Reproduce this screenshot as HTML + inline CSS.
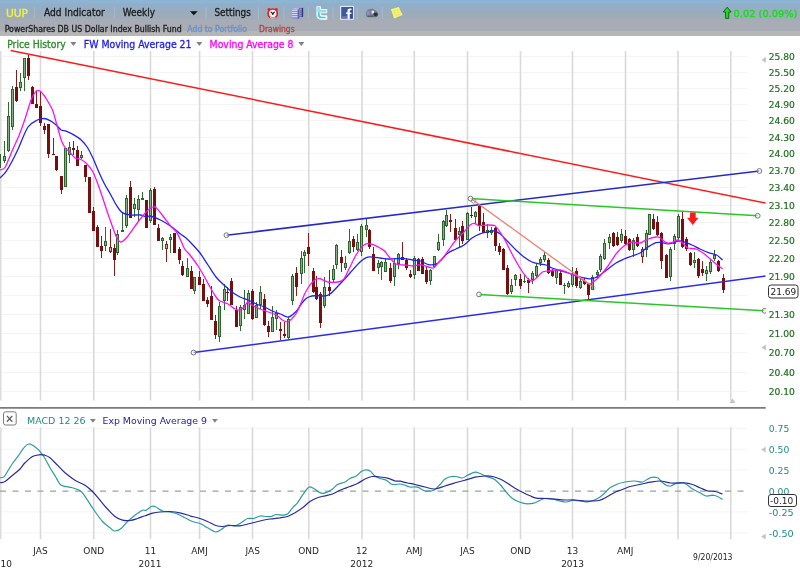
<!DOCTYPE html>
<html lang="en"><head><meta charset="utf-8"><title>UUP Weekly Chart</title>
<style>
html,body{margin:0;padding:0;background:#fff;}
body{width:800px;height:568px;overflow:hidden;}
svg{display:block;will-change:transform;}
text{font-family:"DejaVu Sans","Liberation Sans",sans-serif;}
.t{font-family:"DejaVu Sans Condensed","DejaVu Sans","Liberation Sans",sans-serif;}
.ax{font-size:9.2px;fill:#1f6f1f;stroke:#1f6f1f;stroke-width:0.2px;}
.mx{font-size:9.2px;fill:#1f8c8c;}
.dt{font-size:9px;fill:#262626;text-anchor:middle;}
</style></head><body>
<svg width="800" height="568" viewBox="0 0 800 568">
<defs><linearGradient id="hg" x1="0" y1="0" x2="0" y2="1">
<stop offset="0" stop-color="#8cb4d3"/>
<stop offset="0.08" stop-color="#8cb4d3"/>
<stop offset="0.10" stop-color="#93aec7"/>
<stop offset="0.25" stop-color="#93aec6"/>
<stop offset="0.30" stop-color="#95adbe"/>
<stop offset="0.36" stop-color="#9cacba"/>
<stop offset="0.52" stop-color="#9facb8"/>
<stop offset="0.56" stop-color="#a8acb5"/>
<stop offset="0.86" stop-color="#a8acb5"/>
<stop offset="0.875" stop-color="#b5b7b6"/>
<stop offset="1" stop-color="#b5b7b6"/>
</linearGradient></defs>
<rect x="0" y="0" width="800" height="568" fill="#fff"/>
<rect x="0" y="0" width="800" height="36" fill="url(#hg)"/>
<text class="t" x="5.9" y="16.7" font-size="10.3" fill="#f2f23c" stroke="#f2f23c" stroke-width="0.28" textLength="22.2" lengthAdjust="spacingAndGlyphs">UUP</text>
<text class="t" x="44" y="15.5" font-size="9.9" fill="#1c1c1c" stroke="#1c1c1c" stroke-width="0.28" textLength="60.8" lengthAdjust="spacingAndGlyphs">Add Indicator</text>
<text class="t" x="122.7" y="15.5" font-size="9.9" fill="#1c1c1c" stroke="#1c1c1c" stroke-width="0.28" textLength="32.3" lengthAdjust="spacingAndGlyphs">Weekly</text>
<text class="t" x="214.4" y="15.5" font-size="9.9" fill="#1c1c1c" stroke="#1c1c1c" stroke-width="0.28" textLength="36.5" lengthAdjust="spacingAndGlyphs">Settings</text>
<text class="t" x="4.7" y="32.3" font-size="8.1" fill="#1e1e1e" stroke="#1e1e1e" stroke-width="0.28" textLength="177.1" lengthAdjust="spacingAndGlyphs">PowerShares DB US Dollar Index Bullish Fund</text>
<text class="t" x="187.3" y="32.3" font-size="8.1" fill="#6a90cc" stroke="#6a90cc" stroke-width="0.28" textLength="59.7" lengthAdjust="spacingAndGlyphs">Add to Portfolio</text>
<text class="t" x="259.1" y="32.3" font-size="8.1" fill="#b04545" stroke="#b04545" stroke-width="0.28" textLength="35.5" lengthAdjust="spacingAndGlyphs">Drawings</text>
<text class="t" x="7.2" y="47.5" font-size="10" fill="#2a8a2a" stroke="#2a8a2a" stroke-width="0.28" textLength="58.5" lengthAdjust="spacingAndGlyphs">Price History</text>
<text class="t" x="83.75" y="47.5" font-size="10" fill="#1c1cf0" stroke="#1c1cf0" stroke-width="0.28" textLength="107.8" lengthAdjust="spacingAndGlyphs">FW Moving Average 21</text>
<text class="t" x="209.6" y="47.5" font-size="10" fill="#ff00ff" stroke="#ff00ff" stroke-width="0.28" textLength="83.9" lengthAdjust="spacingAndGlyphs">Moving Average 8</text>
<text class="t" x="733.6" y="16.7" font-size="9.3" fill="#0ee40e" stroke="#0ee40e" stroke-width="0.28" textLength="63.8" lengthAdjust="spacingAndGlyphs">0.02 (0.09%)</text>
<rect x="33.9" y="7" width="1" height="12" fill="#a9bdd0" opacity="0.8"/>
<rect x="113.9" y="7" width="1" height="12" fill="#a9bdd0" opacity="0.8"/>
<rect x="205.5" y="7" width="1" height="12" fill="#a9bdd0" opacity="0.8"/>
<rect x="258.0" y="7" width="1" height="12" fill="#a9bdd0" opacity="0.8"/>
<rect x="283.4" y="7" width="1" height="12" fill="#a9bdd0" opacity="0.8"/>
<rect x="307.8" y="7" width="1" height="12" fill="#a9bdd0" opacity="0.8"/>
<rect x="332.5" y="7" width="1" height="12" fill="#a9bdd0" opacity="0.8"/>
<rect x="357.0" y="7" width="1" height="12" fill="#a9bdd0" opacity="0.8"/>
<rect x="382.0" y="7" width="1" height="12" fill="#a9bdd0" opacity="0.8"/>
<path d="M190 11.3h7.7l-3.85 3.9z" fill="#111"/>
<path d="M70.4 42h6l-3 4z" fill="#808080"/>
<path d="M196.3 42h6l-3 4z" fill="#808080"/>
<path d="M298.3 42h6l-3 4z" fill="#808080"/>
<path d="M727.2 7.2L731.2 12H728.8V18.4H725.6V12H723.2Z" fill="#00f000" stroke="#1f4f1f" stroke-width="0.9" stroke-linejoin="round"/>
<g>
<circle cx="269.1" cy="9.5" r="1.6" fill="#f01a1a"/><circle cx="276.3" cy="9.5" r="1.6" fill="#f01a1a"/>
<circle cx="272.7" cy="13.6" r="4.6" fill="#e2f6f6" stroke="#f01a1a" stroke-width="1.7"/>
<path d="M271 11.9l1.8 1.9 1.8-1.9M272.8 13.8v1.3" stroke="#1c1c1c" stroke-width="1.2" fill="none"/>
<path d="M270 17.4c1.6 0.9 3.8 0.9 5.4 0" stroke="#a8e6e6" stroke-width="1.2" fill="none"/>
<rect x="298.6" y="7.4" width="4.5" height="9.6" rx="1" fill="#6266b0"/>
<path d="M298.6 9.4h4.5M298.6 11.4h4.5M298.6 13.4h4.5M298.6 15.4h4.5" stroke="#a8a8e8" stroke-width="0.8"/>
<rect x="301.8" y="7.8" width="1.3" height="9" fill="#34346c"/>
<rect x="292" y="8.6" width="7.2" height="10.2" rx="1.2" fill="#8488d2"/>
<path d="M292 10.4h7.2M292 12.5h7.2M292 14.6h7.2M292 16.7h7.2" stroke="#dde0f8" stroke-width="1"/>
<rect x="297.6" y="9" width="1.6" height="9.6" fill="#50509c" opacity="0.8"/>
<ellipse cx="295.6" cy="8.8" rx="3.4" ry="0.9" fill="#b8bcf0"/><ellipse cx="300.8" cy="7.6" rx="2.2" ry="0.7" fill="#a0a4e0"/>
<path d="M317.2 6.9h3.2v2.8h6.1v2.9h-6.1v2.1c0 1 0.6 1.4 1.6 1.4h4.5v2.8h-5.1c-2.7 0-4.2-1.5-4.2-4.1z" fill="#2ad0f2" stroke="#fbffff" stroke-width="1.5" stroke-linejoin="round"/>
<path d="M317.2 6.9h3.2v2.8h6.1v2.9h-9.3z" fill="#9adcea"/>
<rect x="340.7" y="6.4" width="12.6" height="12.8" fill="#3b5aa2" stroke="#f4f6fb" stroke-width="1"/>
<rect x="350.5" y="6.9" width="2.3" height="11.8" fill="#2c3f92" opacity="0.7"/>
<path d="M347.5 18.7v-4.7h-1.5v-1.6h1.5v-1.5c0-1.4 0.9-2.3 2.4-2.3h1.6v1.7h-1.1c-0.5 0-0.7 0.3-0.7 0.8v1.3h1.7v1.6h-1.7v4.7z" fill="#fff"/>
<rect x="342.2" y="16.6" width="5" height="0.8" fill="#8ea6d8"/>
<path d="M366 11.8l2.2-2.2 4-1.2 3 1.6 2.6 2.6v3.4l-2 1.2h-8.4l-1.6-1.6z" fill="#7c7e88"/>
<rect x="366.9" y="11" width="2.6" height="4.4" fill="#8a8ae0"/>
<path d="M371.6 10.8h2.2l0.4 1.5-1.2 1.1h-1.4z" fill="#ececec"/>
<circle cx="375.7" cy="14.4" r="2" fill="#1e2c34" stroke="#55606a" stroke-width="0.6"/>
<path d="M367.5 16.2h6" stroke="#3c5058" stroke-width="0.9"/>
<path d="M390.9 9.2l7.9-2.3 3.7 8.1-8.4 3.4z" fill="#f6f66e"/>
<path d="M393.4 11.2l1.8-0.5M396.6 10.3l1.8-0.5M394.2 13.2l1.8-0.5M397.4 12.3l1.8-0.5" stroke="#dede58" stroke-width="0.9"/>
<path d="M395.6 15.6l2-0.8M398.6 14.6l1.8-0.6" stroke="#f4b8c8" stroke-width="1"/>
</g>
<g shape-rendering="crispEdges">
<rect x="1" y="56" width="747" height="1" fill="#f4f4f4"/>
<rect x="1" y="72" width="747" height="1" fill="#f4f4f4"/>
<rect x="1" y="88" width="747" height="1" fill="#f4f4f4"/>
<rect x="1" y="104" width="747" height="1" fill="#f4f4f4"/>
<rect x="1" y="120" width="747" height="1" fill="#f4f4f4"/>
<rect x="1" y="137" width="747" height="1" fill="#f4f4f4"/>
<rect x="1" y="153" width="747" height="1" fill="#f4f4f4"/>
<rect x="1" y="170" width="747" height="1" fill="#f4f4f4"/>
<rect x="1" y="187" width="747" height="1" fill="#f4f4f4"/>
<rect x="1" y="205" width="747" height="1" fill="#f4f4f4"/>
<rect x="1" y="222" width="747" height="1" fill="#f4f4f4"/>
<rect x="1" y="240" width="747" height="1" fill="#f4f4f4"/>
<rect x="1" y="258" width="747" height="1" fill="#f4f4f4"/>
<rect x="1" y="276" width="747" height="1" fill="#f4f4f4"/>
<rect x="1" y="295" width="747" height="1" fill="#f4f4f4"/>
<rect x="1" y="314" width="747" height="1" fill="#f4f4f4"/>
<rect x="1" y="333" width="747" height="1" fill="#f4f4f4"/>
<rect x="1" y="352" width="747" height="1" fill="#f4f4f4"/>
<rect x="1" y="372" width="747" height="1" fill="#f4f4f4"/>
<rect x="1" y="391" width="747" height="1" fill="#f4f4f4"/>
</g>
<rect x="1" y="427.8" width="747" height="1" fill="#f4f4f4"/>
<rect x="1" y="448.7" width="747" height="1" fill="#f4f4f4"/>
<rect x="1" y="469.6" width="747" height="1" fill="#f4f4f4"/>
<rect x="1" y="511.4" width="747" height="1" fill="#f4f4f4"/>
<rect x="1" y="532.3" width="747" height="1" fill="#f4f4f4"/>
<rect x="0" y="51" width="1.5" height="349.5" fill="#dcdcdc"/>
<rect x="0" y="427.5" width="1.5" height="111.5" fill="#dcdcdc"/>
<rect x="39.70" y="51" width="1.6" height="349.6" fill="#d9d9d9"/>
<rect x="39.70" y="427.4" width="1.6" height="111.8" fill="#d9d9d9"/>
<rect x="92.95" y="51" width="1.6" height="349.6" fill="#d9d9d9"/>
<rect x="92.95" y="427.4" width="1.6" height="111.8" fill="#d9d9d9"/>
<rect x="149.70" y="51" width="1.6" height="349.6" fill="#d9d9d9"/>
<rect x="149.70" y="427.4" width="1.6" height="111.8" fill="#d9d9d9"/>
<rect x="198.80" y="51" width="1.6" height="349.6" fill="#d9d9d9"/>
<rect x="198.80" y="427.4" width="1.6" height="111.8" fill="#d9d9d9"/>
<rect x="251.70" y="51" width="1.6" height="349.6" fill="#d9d9d9"/>
<rect x="251.70" y="427.4" width="1.6" height="111.8" fill="#d9d9d9"/>
<rect x="307.95" y="51" width="1.6" height="349.6" fill="#d9d9d9"/>
<rect x="307.95" y="427.4" width="1.6" height="111.8" fill="#d9d9d9"/>
<rect x="361.20" y="51" width="1.6" height="349.6" fill="#d9d9d9"/>
<rect x="361.20" y="427.4" width="1.6" height="111.8" fill="#d9d9d9"/>
<rect x="413.45" y="51" width="1.6" height="349.6" fill="#d9d9d9"/>
<rect x="413.45" y="427.4" width="1.6" height="111.8" fill="#d9d9d9"/>
<rect x="466.70" y="51" width="1.6" height="349.6" fill="#d9d9d9"/>
<rect x="466.70" y="427.4" width="1.6" height="111.8" fill="#d9d9d9"/>
<rect x="519.70" y="51" width="1.6" height="349.6" fill="#d9d9d9"/>
<rect x="519.70" y="427.4" width="1.6" height="111.8" fill="#d9d9d9"/>
<rect x="571.70" y="51" width="1.6" height="349.6" fill="#d9d9d9"/>
<rect x="571.70" y="427.4" width="1.6" height="111.8" fill="#d9d9d9"/>
<rect x="624.70" y="51" width="1.6" height="349.6" fill="#d9d9d9"/>
<rect x="624.70" y="427.4" width="1.6" height="111.8" fill="#d9d9d9"/>
<rect x="677.20" y="51" width="1.6" height="349.6" fill="#d9d9d9"/>
<rect x="677.20" y="427.4" width="1.6" height="111.8" fill="#d9d9d9"/>
<rect x="729.95" y="51" width="1.6" height="349.6" fill="#d9d9d9"/>
<rect x="729.95" y="427.4" width="1.6" height="111.8" fill="#d9d9d9"/>
<rect x="0" y="407" width="765.7" height="1.1" fill="#7c7c7c"/><rect x="0" y="408" width="765.7" height="1" fill="#9c9c9c"/>
<path d="M0 491.1H748" stroke="#97a39b" stroke-width="1.25" stroke-dasharray="6 6.5" fill="none"/>
<g class="ax">
<text x="768.7" y="60.4" textLength="26.2" lengthAdjust="spacingAndGlyphs">25.80</text>
<text x="768.7" y="76.1" textLength="26.2" lengthAdjust="spacingAndGlyphs">25.50</text>
<text x="768.7" y="92.0" textLength="26.2" lengthAdjust="spacingAndGlyphs">25.20</text>
<text x="768.7" y="108.0" textLength="26.2" lengthAdjust="spacingAndGlyphs">24.90</text>
<text x="768.7" y="124.3" textLength="26.2" lengthAdjust="spacingAndGlyphs">24.60</text>
<text x="768.7" y="140.8" textLength="26.2" lengthAdjust="spacingAndGlyphs">24.30</text>
<text x="768.7" y="157.4" textLength="26.2" lengthAdjust="spacingAndGlyphs">24.00</text>
<text x="768.7" y="174.3" textLength="26.2" lengthAdjust="spacingAndGlyphs">23.70</text>
<text x="768.7" y="191.4" textLength="26.2" lengthAdjust="spacingAndGlyphs">23.40</text>
<text x="768.7" y="208.7" textLength="26.2" lengthAdjust="spacingAndGlyphs">23.10</text>
<text x="768.7" y="226.3" textLength="26.2" lengthAdjust="spacingAndGlyphs">22.80</text>
<text x="768.7" y="244.0" textLength="26.2" lengthAdjust="spacingAndGlyphs">22.50</text>
<text x="768.7" y="262.0" textLength="26.2" lengthAdjust="spacingAndGlyphs">22.20</text>
<text x="768.7" y="280.3" textLength="26.2" lengthAdjust="spacingAndGlyphs">21.90</text>
<text x="768.7" y="317.6" textLength="26.2" lengthAdjust="spacingAndGlyphs">21.30</text>
<text x="768.7" y="336.6" textLength="26.2" lengthAdjust="spacingAndGlyphs">21.00</text>
<text x="768.7" y="355.9" textLength="26.2" lengthAdjust="spacingAndGlyphs">20.70</text>
<text x="768.7" y="375.5" textLength="26.2" lengthAdjust="spacingAndGlyphs">20.40</text>
<text x="768.7" y="395.4" textLength="26.2" lengthAdjust="spacingAndGlyphs">20.10</text>
</g>
<g class="mx">
<text x="768.7" y="432.2" textLength="20.6" lengthAdjust="spacingAndGlyphs">0.75</text>
<text x="768.7" y="453.1" textLength="20.6" lengthAdjust="spacingAndGlyphs">0.50</text>
<text x="768.7" y="474.0" textLength="20.6" lengthAdjust="spacingAndGlyphs">0.25</text>
<text x="768.7" y="494.9" textLength="20.6" lengthAdjust="spacingAndGlyphs">0.00</text>
<text x="768.7" y="515.8" textLength="25" lengthAdjust="spacingAndGlyphs">-0.25</text>
<text x="768.7" y="536.7" textLength="25" lengthAdjust="spacingAndGlyphs">-0.50</text>
</g>
<path d="M761.5 59.9l4.4-2.9v5.8z" fill="#c2c2c2"/>
<path d="M761.5 347.5l4.4-2.9v5.8z" fill="#c2c2c2"/>
<path d="M761.2 449.6l4.5-2.9v5.8z" fill="#c2c2c2"/>
<path d="M761.2 536.6l4.5-2.9v5.8z" fill="#c2c2c2"/>
<path d="M732.5 398.5l3 4.5h-6z" fill="#c4c4c4"/>
<g shape-rendering="crispEdges">
<rect x="-1" y="153" width="1" height="17" fill="#2f6b2f"/>
<rect x="-2" y="154" width="3" height="14" fill="#2d632d"/>
<rect x="-1" y="155" width="1" height="12" fill="#84b084"/>
<rect x="4" y="141" width="1" height="22" fill="#2f6b2f"/>
<rect x="3" y="156" width="3" height="5" fill="#2d632d"/>
<rect x="4" y="157" width="1" height="3" fill="#84b084"/>
<rect x="8" y="102" width="1" height="50" fill="#2f6b2f"/>
<rect x="7" y="116" width="3" height="35" fill="#2d632d"/>
<rect x="8" y="117" width="1" height="33" fill="#84b084"/>
<rect x="12" y="86" width="1" height="44" fill="#2f6b2f"/>
<rect x="11" y="89" width="3" height="38" fill="#2d632d"/>
<rect x="12" y="90" width="1" height="36" fill="#84b084"/>
<rect x="16" y="70" width="1" height="32" fill="#8a1c1c"/>
<rect x="15" y="87" width="3" height="14" fill="#741010"/>
<rect x="20" y="73" width="1" height="18" fill="#2f6b2f"/>
<rect x="19" y="82" width="3" height="6" fill="#2d632d"/>
<rect x="20" y="83" width="1" height="4" fill="#84b084"/>
<rect x="24" y="58" width="1" height="33" fill="#2f6b2f"/>
<rect x="23" y="58" width="3" height="20" fill="#2d632d"/>
<rect x="24" y="59" width="1" height="18" fill="#84b084"/>
<rect x="28" y="55" width="1" height="25" fill="#8a1c1c"/>
<rect x="27" y="58" width="3" height="18" fill="#741010"/>
<rect x="32" y="86" width="1" height="18" fill="#8a1c1c"/>
<rect x="31" y="87" width="3" height="17" fill="#741010"/>
<rect x="36" y="91" width="1" height="17" fill="#8a1c1c"/>
<rect x="35" y="104" width="3" height="4" fill="#741010"/>
<rect x="40" y="92" width="1" height="34" fill="#8a1c1c"/>
<rect x="39" y="106" width="3" height="17" fill="#741010"/>
<rect x="44" y="123" width="1" height="11" fill="#8a1c1c"/>
<rect x="43" y="126" width="3" height="4" fill="#741010"/>
<rect x="48" y="124" width="1" height="34" fill="#8a1c1c"/>
<rect x="47" y="124" width="3" height="30" fill="#741010"/>
<rect x="53" y="138" width="1" height="17" fill="#8a1c1c"/>
<rect x="52" y="154" width="3" height="1" fill="#741010"/>
<rect x="56" y="156" width="1" height="15" fill="#8a1c1c"/>
<rect x="55" y="156" width="3" height="14" fill="#741010"/>
<rect x="61" y="176" width="1" height="18" fill="#8a1c1c"/>
<rect x="60" y="176" width="3" height="14" fill="#741010"/>
<rect x="65" y="148" width="1" height="39" fill="#2f6b2f"/>
<rect x="64" y="148" width="3" height="39" fill="#2d632d"/>
<rect x="65" y="149" width="1" height="37" fill="#84b084"/>
<rect x="69" y="142" width="1" height="21" fill="#2f6b2f"/>
<rect x="68" y="147" width="3" height="8" fill="#2d632d"/>
<rect x="69" y="148" width="1" height="6" fill="#84b084"/>
<rect x="73" y="141" width="1" height="14" fill="#8a1c1c"/>
<rect x="72" y="148" width="3" height="2" fill="#741010"/>
<rect x="77" y="146" width="1" height="20" fill="#8a1c1c"/>
<rect x="76" y="150" width="3" height="16" fill="#741010"/>
<rect x="81" y="151" width="1" height="8" fill="#2f6b2f"/>
<rect x="80" y="155" width="3" height="3" fill="#2d632d"/>
<rect x="81" y="156" width="1" height="1" fill="#84b084"/>
<rect x="85" y="165" width="1" height="17" fill="#8a1c1c"/>
<rect x="84" y="165" width="3" height="12" fill="#741010"/>
<rect x="89" y="177" width="1" height="36" fill="#8a1c1c"/>
<rect x="88" y="177" width="3" height="36" fill="#741010"/>
<rect x="93" y="207" width="1" height="24" fill="#8a1c1c"/>
<rect x="92" y="211" width="3" height="20" fill="#741010"/>
<rect x="97" y="225" width="1" height="22" fill="#8a1c1c"/>
<rect x="96" y="227" width="3" height="20" fill="#741010"/>
<rect x="101" y="236" width="1" height="22" fill="#8a1c1c"/>
<rect x="100" y="246" width="3" height="5" fill="#741010"/>
<rect x="105" y="227" width="1" height="24" fill="#2f6b2f"/>
<rect x="104" y="241" width="3" height="5" fill="#2d632d"/>
<rect x="105" y="242" width="1" height="3" fill="#84b084"/>
<rect x="110" y="229" width="1" height="24" fill="#8a1c1c"/>
<rect x="109" y="247" width="3" height="5" fill="#8a2020"/>
<rect x="110" y="248" width="1" height="3" fill="#e0a8a8"/>
<rect x="114" y="244" width="1" height="32" fill="#8a1c1c"/>
<rect x="113" y="248" width="3" height="12" fill="#741010"/>
<rect x="117" y="230" width="1" height="25" fill="#2f6b2f"/>
<rect x="116" y="234" width="3" height="19" fill="#2d632d"/>
<rect x="117" y="235" width="1" height="17" fill="#84b084"/>
<rect x="122" y="212" width="1" height="20" fill="#2f6b2f"/>
<rect x="121" y="230" width="3" height="2" fill="#2d632d"/>
<rect x="126" y="195" width="1" height="33" fill="#2f6b2f"/>
<rect x="125" y="198" width="3" height="28" fill="#2d632d"/>
<rect x="126" y="199" width="1" height="26" fill="#84b084"/>
<rect x="130" y="181" width="1" height="37" fill="#8a1c1c"/>
<rect x="129" y="187" width="3" height="31" fill="#741010"/>
<rect x="134" y="198" width="1" height="19" fill="#2f6b2f"/>
<rect x="133" y="204" width="3" height="5" fill="#2d632d"/>
<rect x="134" y="205" width="1" height="3" fill="#84b084"/>
<rect x="138" y="195" width="1" height="27" fill="#2f6b2f"/>
<rect x="137" y="199" width="3" height="11" fill="#2d632d"/>
<rect x="138" y="200" width="1" height="9" fill="#84b084"/>
<rect x="142" y="192" width="1" height="8" fill="#2f6b2f"/>
<rect x="141" y="198" width="3" height="2" fill="#2d632d"/>
<rect x="146" y="200" width="1" height="28" fill="#8a1c1c"/>
<rect x="145" y="200" width="3" height="28" fill="#741010"/>
<rect x="150" y="188" width="1" height="35" fill="#2f6b2f"/>
<rect x="149" y="190" width="3" height="31" fill="#2d632d"/>
<rect x="150" y="191" width="1" height="29" fill="#84b084"/>
<rect x="154" y="187" width="1" height="38" fill="#8a1c1c"/>
<rect x="153" y="189" width="3" height="36" fill="#741010"/>
<rect x="158" y="224" width="1" height="17" fill="#8a1c1c"/>
<rect x="157" y="228" width="3" height="13" fill="#741010"/>
<rect x="162" y="237" width="1" height="13" fill="#2f6b2f"/>
<rect x="161" y="238" width="3" height="3" fill="#2d632d"/>
<rect x="162" y="239" width="1" height="1" fill="#84b084"/>
<rect x="166" y="241" width="1" height="21" fill="#8a1c1c"/>
<rect x="165" y="244" width="3" height="5" fill="#8a2020"/>
<rect x="166" y="245" width="1" height="3" fill="#e0a8a8"/>
<rect x="170" y="234" width="1" height="19" fill="#2f6b2f"/>
<rect x="169" y="237" width="3" height="3" fill="#2d632d"/>
<rect x="170" y="238" width="1" height="1" fill="#84b084"/>
<rect x="174" y="233" width="1" height="20" fill="#8a1c1c"/>
<rect x="173" y="233" width="3" height="20" fill="#741010"/>
<rect x="179" y="247" width="1" height="17" fill="#8a1c1c"/>
<rect x="178" y="249" width="3" height="11" fill="#741010"/>
<rect x="182" y="261" width="1" height="15" fill="#8a1c1c"/>
<rect x="181" y="266" width="3" height="9" fill="#741010"/>
<rect x="187" y="258" width="1" height="19" fill="#2f6b2f"/>
<rect x="186" y="268" width="3" height="9" fill="#2d632d"/>
<rect x="187" y="269" width="1" height="7" fill="#84b084"/>
<rect x="191" y="266" width="1" height="23" fill="#8a1c1c"/>
<rect x="190" y="271" width="3" height="18" fill="#741010"/>
<rect x="194" y="277" width="1" height="17" fill="#2f6b2f"/>
<rect x="193" y="277" width="3" height="14" fill="#2d632d"/>
<rect x="194" y="278" width="1" height="12" fill="#84b084"/>
<rect x="199" y="271" width="1" height="14" fill="#8a1c1c"/>
<rect x="198" y="277" width="3" height="8" fill="#741010"/>
<rect x="203" y="279" width="1" height="22" fill="#8a1c1c"/>
<rect x="202" y="284" width="3" height="17" fill="#741010"/>
<rect x="207" y="297" width="1" height="10" fill="#8a1c1c"/>
<rect x="206" y="300" width="3" height="4" fill="#741010"/>
<rect x="211" y="286" width="1" height="34" fill="#8a1c1c"/>
<rect x="210" y="296" width="3" height="24" fill="#741010"/>
<rect x="215" y="315" width="1" height="24" fill="#8a1c1c"/>
<rect x="214" y="321" width="3" height="14" fill="#741010"/>
<rect x="219" y="302" width="1" height="40" fill="#2f6b2f"/>
<rect x="218" y="306" width="3" height="31" fill="#2d632d"/>
<rect x="219" y="307" width="1" height="29" fill="#84b084"/>
<rect x="224" y="284" width="1" height="26" fill="#2f6b2f"/>
<rect x="223" y="289" width="3" height="12" fill="#2d632d"/>
<rect x="224" y="290" width="1" height="10" fill="#84b084"/>
<rect x="227" y="287" width="1" height="14" fill="#8a1c1c"/>
<rect x="226" y="292" width="3" height="1" fill="#741010"/>
<rect x="231" y="278" width="1" height="27" fill="#8a1c1c"/>
<rect x="230" y="281" width="3" height="24" fill="#741010"/>
<rect x="236" y="306" width="1" height="21" fill="#8a1c1c"/>
<rect x="235" y="310" width="3" height="17" fill="#741010"/>
<rect x="240" y="305" width="1" height="26" fill="#2f6b2f"/>
<rect x="239" y="307" width="3" height="19" fill="#2d632d"/>
<rect x="240" y="308" width="1" height="17" fill="#84b084"/>
<rect x="244" y="290" width="1" height="29" fill="#2f6b2f"/>
<rect x="243" y="305" width="3" height="5" fill="#2d632d"/>
<rect x="244" y="306" width="1" height="3" fill="#84b084"/>
<rect x="248" y="290" width="1" height="24" fill="#2f6b2f"/>
<rect x="247" y="293" width="3" height="21" fill="#2d632d"/>
<rect x="248" y="294" width="1" height="19" fill="#84b084"/>
<rect x="252" y="289" width="1" height="31" fill="#8a1c1c"/>
<rect x="251" y="291" width="3" height="28" fill="#741010"/>
<rect x="256" y="302" width="1" height="16" fill="#2f6b2f"/>
<rect x="255" y="305" width="3" height="13" fill="#2d632d"/>
<rect x="256" y="306" width="1" height="11" fill="#84b084"/>
<rect x="260" y="286" width="1" height="23" fill="#2f6b2f"/>
<rect x="259" y="292" width="3" height="13" fill="#2d632d"/>
<rect x="260" y="293" width="1" height="11" fill="#84b084"/>
<rect x="264" y="294" width="1" height="32" fill="#8a1c1c"/>
<rect x="263" y="299" width="3" height="26" fill="#741010"/>
<rect x="268" y="321" width="1" height="16" fill="#8a1c1c"/>
<rect x="267" y="326" width="3" height="6" fill="#741010"/>
<rect x="272" y="306" width="1" height="26" fill="#2f6b2f"/>
<rect x="271" y="317" width="3" height="15" fill="#2d632d"/>
<rect x="272" y="318" width="1" height="13" fill="#84b084"/>
<rect x="276" y="310" width="1" height="20" fill="#2f6b2f"/>
<rect x="275" y="313" width="3" height="6" fill="#2d632d"/>
<rect x="276" y="314" width="1" height="4" fill="#84b084"/>
<rect x="280" y="322" width="1" height="18" fill="#8a1c1c"/>
<rect x="279" y="329" width="3" height="2" fill="#741010"/>
<rect x="284" y="322" width="1" height="16" fill="#8a1c1c"/>
<rect x="283" y="334" width="3" height="2" fill="#741010"/>
<rect x="288" y="317" width="1" height="22" fill="#2f6b2f"/>
<rect x="287" y="319" width="3" height="19" fill="#2d632d"/>
<rect x="288" y="320" width="1" height="17" fill="#84b084"/>
<rect x="292" y="274" width="1" height="31" fill="#2f6b2f"/>
<rect x="291" y="276" width="3" height="25" fill="#2d632d"/>
<rect x="292" y="277" width="1" height="23" fill="#84b084"/>
<rect x="296" y="267" width="1" height="29" fill="#8a1c1c"/>
<rect x="295" y="273" width="3" height="14" fill="#741010"/>
<rect x="301" y="251" width="1" height="33" fill="#2f6b2f"/>
<rect x="300" y="258" width="3" height="16" fill="#2d632d"/>
<rect x="301" y="259" width="1" height="14" fill="#84b084"/>
<rect x="304" y="250" width="1" height="23" fill="#2f6b2f"/>
<rect x="303" y="252" width="3" height="4" fill="#2d632d"/>
<rect x="304" y="253" width="1" height="2" fill="#84b084"/>
<rect x="308" y="233" width="1" height="33" fill="#8a1c1c"/>
<rect x="307" y="247" width="3" height="7" fill="#741010"/>
<rect x="313" y="268" width="1" height="25" fill="#8a1c1c"/>
<rect x="312" y="271" width="3" height="21" fill="#741010"/>
<rect x="316" y="276" width="1" height="24" fill="#8a1c1c"/>
<rect x="315" y="287" width="3" height="12" fill="#741010"/>
<rect x="320" y="292" width="1" height="36" fill="#8a1c1c"/>
<rect x="319" y="294" width="3" height="29" fill="#741010"/>
<rect x="324" y="277" width="1" height="31" fill="#2f6b2f"/>
<rect x="323" y="287" width="3" height="19" fill="#2d632d"/>
<rect x="324" y="288" width="1" height="17" fill="#84b084"/>
<rect x="329" y="270" width="1" height="26" fill="#8a1c1c"/>
<rect x="328" y="287" width="3" height="4" fill="#741010"/>
<rect x="333" y="265" width="1" height="17" fill="#2f6b2f"/>
<rect x="332" y="269" width="3" height="11" fill="#2d632d"/>
<rect x="333" y="270" width="1" height="9" fill="#84b084"/>
<rect x="336" y="244" width="1" height="25" fill="#2f6b2f"/>
<rect x="335" y="245" width="3" height="20" fill="#2d632d"/>
<rect x="336" y="246" width="1" height="18" fill="#84b084"/>
<rect x="341" y="250" width="1" height="22" fill="#8a1c1c"/>
<rect x="340" y="257" width="3" height="6" fill="#741010"/>
<rect x="345" y="256" width="1" height="14" fill="#2f6b2f"/>
<rect x="344" y="263" width="3" height="5" fill="#2d632d"/>
<rect x="345" y="264" width="1" height="3" fill="#84b084"/>
<rect x="349" y="229" width="1" height="25" fill="#2f6b2f"/>
<rect x="348" y="241" width="3" height="12" fill="#2d632d"/>
<rect x="349" y="242" width="1" height="10" fill="#84b084"/>
<rect x="353" y="236" width="1" height="16" fill="#8a1c1c"/>
<rect x="352" y="239" width="3" height="8" fill="#741010"/>
<rect x="357" y="234" width="1" height="17" fill="#2f6b2f"/>
<rect x="356" y="242" width="3" height="8" fill="#2d632d"/>
<rect x="357" y="243" width="1" height="6" fill="#84b084"/>
<rect x="361" y="224" width="1" height="32" fill="#2f6b2f"/>
<rect x="360" y="226" width="3" height="26" fill="#2d632d"/>
<rect x="361" y="227" width="1" height="24" fill="#84b084"/>
<rect x="366" y="219" width="1" height="18" fill="#2f6b2f"/>
<rect x="365" y="225" width="3" height="5" fill="#2d632d"/>
<rect x="366" y="226" width="1" height="3" fill="#84b084"/>
<rect x="369" y="229" width="1" height="20" fill="#8a1c1c"/>
<rect x="368" y="230" width="3" height="17" fill="#741010"/>
<rect x="373" y="247" width="1" height="24" fill="#8a1c1c"/>
<rect x="372" y="254" width="3" height="17" fill="#741010"/>
<rect x="378" y="260" width="1" height="14" fill="#2f6b2f"/>
<rect x="377" y="263" width="3" height="5" fill="#2d632d"/>
<rect x="378" y="264" width="1" height="3" fill="#84b084"/>
<rect x="381" y="261" width="1" height="19" fill="#2f6b2f"/>
<rect x="380" y="262" width="3" height="5" fill="#2d632d"/>
<rect x="381" y="263" width="1" height="3" fill="#84b084"/>
<rect x="385" y="258" width="1" height="14" fill="#2f6b2f"/>
<rect x="384" y="262" width="3" height="10" fill="#2d632d"/>
<rect x="385" y="263" width="1" height="8" fill="#84b084"/>
<rect x="390" y="263" width="1" height="20" fill="#8a1c1c"/>
<rect x="389" y="268" width="3" height="13" fill="#741010"/>
<rect x="394" y="258" width="1" height="28" fill="#2f6b2f"/>
<rect x="393" y="263" width="3" height="14" fill="#2d632d"/>
<rect x="394" y="264" width="1" height="12" fill="#84b084"/>
<rect x="398" y="253" width="1" height="16" fill="#2f6b2f"/>
<rect x="397" y="254" width="3" height="10" fill="#2d632d"/>
<rect x="398" y="255" width="1" height="8" fill="#84b084"/>
<rect x="402" y="242" width="1" height="18" fill="#8a1c1c"/>
<rect x="401" y="257" width="3" height="3" fill="#741010"/>
<rect x="406" y="258" width="1" height="12" fill="#8a1c1c"/>
<rect x="405" y="260" width="3" height="8" fill="#741010"/>
<rect x="410" y="270" width="1" height="8" fill="#8a1c1c"/>
<rect x="409" y="274" width="3" height="3" fill="#741010"/>
<rect x="414" y="256" width="1" height="23" fill="#2f6b2f"/>
<rect x="413" y="258" width="3" height="17" fill="#2d632d"/>
<rect x="414" y="259" width="1" height="15" fill="#84b084"/>
<rect x="418" y="258" width="1" height="13" fill="#8a1c1c"/>
<rect x="417" y="259" width="3" height="12" fill="#741010"/>
<rect x="422" y="257" width="1" height="17" fill="#8a1c1c"/>
<rect x="421" y="259" width="3" height="15" fill="#741010"/>
<rect x="426" y="266" width="1" height="18" fill="#8a1c1c"/>
<rect x="425" y="270" width="3" height="12" fill="#741010"/>
<rect x="430" y="269" width="1" height="16" fill="#2f6b2f"/>
<rect x="429" y="270" width="3" height="11" fill="#2d632d"/>
<rect x="430" y="271" width="1" height="9" fill="#84b084"/>
<rect x="434" y="256" width="1" height="11" fill="#2f6b2f"/>
<rect x="433" y="256" width="3" height="11" fill="#2d632d"/>
<rect x="434" y="257" width="1" height="9" fill="#84b084"/>
<rect x="438" y="234" width="1" height="17" fill="#2f6b2f"/>
<rect x="437" y="242" width="3" height="8" fill="#2d632d"/>
<rect x="438" y="243" width="1" height="6" fill="#84b084"/>
<rect x="443" y="220" width="1" height="26" fill="#2f6b2f"/>
<rect x="442" y="221" width="3" height="19" fill="#2d632d"/>
<rect x="443" y="222" width="1" height="17" fill="#84b084"/>
<rect x="446" y="210" width="1" height="17" fill="#2f6b2f"/>
<rect x="445" y="215" width="3" height="11" fill="#2d632d"/>
<rect x="446" y="216" width="1" height="9" fill="#84b084"/>
<rect x="450" y="214" width="1" height="18" fill="#8a1c1c"/>
<rect x="449" y="220" width="3" height="2" fill="#741010"/>
<rect x="455" y="219" width="1" height="21" fill="#8a1c1c"/>
<rect x="454" y="228" width="3" height="12" fill="#741010"/>
<rect x="459" y="227" width="1" height="20" fill="#2f6b2f"/>
<rect x="458" y="231" width="3" height="4" fill="#2d632d"/>
<rect x="459" y="232" width="1" height="2" fill="#84b084"/>
<rect x="462" y="221" width="1" height="23" fill="#8a1c1c"/>
<rect x="461" y="226" width="3" height="15" fill="#741010"/>
<rect x="467" y="212" width="1" height="28" fill="#2f6b2f"/>
<rect x="466" y="213" width="3" height="27" fill="#2d632d"/>
<rect x="467" y="214" width="1" height="25" fill="#84b084"/>
<rect x="471" y="207" width="1" height="11" fill="#8a1c1c"/>
<rect x="470" y="215" width="3" height="1" fill="#741010"/>
<rect x="475" y="211" width="1" height="12" fill="#2f6b2f"/>
<rect x="474" y="212" width="3" height="5" fill="#2d632d"/>
<rect x="475" y="213" width="1" height="3" fill="#84b084"/>
<rect x="479" y="204" width="1" height="27" fill="#8a1c1c"/>
<rect x="478" y="206" width="3" height="20" fill="#741010"/>
<rect x="483" y="213" width="1" height="20" fill="#8a1c1c"/>
<rect x="482" y="222" width="3" height="11" fill="#741010"/>
<rect x="487" y="224" width="1" height="14" fill="#2f6b2f"/>
<rect x="486" y="230" width="3" height="3" fill="#2d632d"/>
<rect x="487" y="231" width="1" height="1" fill="#84b084"/>
<rect x="491" y="227" width="1" height="8" fill="#2f6b2f"/>
<rect x="490" y="230" width="3" height="3" fill="#2d632d"/>
<rect x="491" y="231" width="1" height="1" fill="#84b084"/>
<rect x="495" y="227" width="1" height="24" fill="#8a1c1c"/>
<rect x="494" y="228" width="3" height="18" fill="#741010"/>
<rect x="499" y="243" width="1" height="12" fill="#8a1c1c"/>
<rect x="498" y="246" width="3" height="6" fill="#741010"/>
<rect x="503" y="248" width="1" height="22" fill="#8a1c1c"/>
<rect x="502" y="249" width="3" height="21" fill="#741010"/>
<rect x="507" y="265" width="1" height="30" fill="#8a1c1c"/>
<rect x="506" y="268" width="3" height="26" fill="#741010"/>
<rect x="511" y="279" width="1" height="15" fill="#2f6b2f"/>
<rect x="510" y="285" width="3" height="7" fill="#2d632d"/>
<rect x="511" y="286" width="1" height="5" fill="#84b084"/>
<rect x="515" y="274" width="1" height="12" fill="#2f6b2f"/>
<rect x="514" y="275" width="3" height="5" fill="#2d632d"/>
<rect x="515" y="276" width="1" height="3" fill="#84b084"/>
<rect x="520" y="274" width="1" height="15" fill="#8a1c1c"/>
<rect x="519" y="279" width="3" height="7" fill="#741010"/>
<rect x="524" y="274" width="1" height="9" fill="#2f6b2f"/>
<rect x="523" y="281" width="3" height="1" fill="#2d632d"/>
<rect x="528" y="278" width="1" height="15" fill="#8a1c1c"/>
<rect x="527" y="280" width="3" height="3" fill="#741010"/>
<rect x="532" y="271" width="1" height="13" fill="#2f6b2f"/>
<rect x="531" y="273" width="3" height="7" fill="#2d632d"/>
<rect x="532" y="274" width="1" height="5" fill="#84b084"/>
<rect x="536" y="264" width="1" height="14" fill="#2f6b2f"/>
<rect x="535" y="266" width="3" height="10" fill="#2d632d"/>
<rect x="536" y="267" width="1" height="8" fill="#84b084"/>
<rect x="540" y="257" width="1" height="9" fill="#2f6b2f"/>
<rect x="539" y="259" width="3" height="4" fill="#2d632d"/>
<rect x="540" y="260" width="1" height="2" fill="#84b084"/>
<rect x="544" y="252" width="1" height="10" fill="#2f6b2f"/>
<rect x="543" y="255" width="3" height="5" fill="#2d632d"/>
<rect x="544" y="256" width="1" height="3" fill="#84b084"/>
<rect x="548" y="258" width="1" height="16" fill="#8a1c1c"/>
<rect x="547" y="260" width="3" height="13" fill="#741010"/>
<rect x="552" y="269" width="1" height="8" fill="#8a1c1c"/>
<rect x="551" y="271" width="3" height="5" fill="#741010"/>
<rect x="556" y="269" width="1" height="15" fill="#2f6b2f"/>
<rect x="555" y="270" width="3" height="8" fill="#2d632d"/>
<rect x="556" y="271" width="1" height="6" fill="#84b084"/>
<rect x="560" y="271" width="1" height="14" fill="#8a1c1c"/>
<rect x="559" y="273" width="3" height="12" fill="#741010"/>
<rect x="564" y="283" width="1" height="11" fill="#2f6b2f"/>
<rect x="563" y="285" width="3" height="1" fill="#2d632d"/>
<rect x="568" y="281" width="1" height="7" fill="#2f6b2f"/>
<rect x="567" y="283" width="3" height="4" fill="#2d632d"/>
<rect x="568" y="284" width="1" height="2" fill="#84b084"/>
<rect x="572" y="267" width="1" height="20" fill="#2f6b2f"/>
<rect x="571" y="274" width="3" height="11" fill="#2d632d"/>
<rect x="572" y="275" width="1" height="9" fill="#84b084"/>
<rect x="576" y="268" width="1" height="20" fill="#8a1c1c"/>
<rect x="575" y="271" width="3" height="15" fill="#741010"/>
<rect x="580" y="278" width="1" height="11" fill="#2f6b2f"/>
<rect x="579" y="281" width="3" height="7" fill="#2d632d"/>
<rect x="580" y="282" width="1" height="5" fill="#84b084"/>
<rect x="584" y="278" width="1" height="7" fill="#8a1c1c"/>
<rect x="583" y="281" width="3" height="3" fill="#741010"/>
<rect x="588" y="283" width="1" height="16" fill="#8a1c1c"/>
<rect x="587" y="284" width="3" height="11" fill="#741010"/>
<rect x="592" y="275" width="1" height="15" fill="#2f6b2f"/>
<rect x="591" y="277" width="3" height="13" fill="#2d632d"/>
<rect x="592" y="278" width="1" height="11" fill="#84b084"/>
<rect x="597" y="270" width="1" height="9" fill="#2f6b2f"/>
<rect x="596" y="272" width="3" height="3" fill="#2d632d"/>
<rect x="597" y="273" width="1" height="1" fill="#84b084"/>
<rect x="600" y="254" width="1" height="18" fill="#2f6b2f"/>
<rect x="599" y="256" width="3" height="14" fill="#2d632d"/>
<rect x="600" y="257" width="1" height="12" fill="#84b084"/>
<rect x="604" y="239" width="1" height="21" fill="#2f6b2f"/>
<rect x="603" y="243" width="3" height="16" fill="#2d632d"/>
<rect x="604" y="244" width="1" height="14" fill="#84b084"/>
<rect x="609" y="234" width="1" height="15" fill="#2f6b2f"/>
<rect x="608" y="237" width="3" height="6" fill="#2d632d"/>
<rect x="609" y="238" width="1" height="4" fill="#84b084"/>
<rect x="613" y="232" width="1" height="15" fill="#8a1c1c"/>
<rect x="612" y="233" width="3" height="13" fill="#741010"/>
<rect x="617" y="232" width="1" height="14" fill="#8a1c1c"/>
<rect x="616" y="237" width="3" height="8" fill="#741010"/>
<rect x="621" y="229" width="1" height="14" fill="#2f6b2f"/>
<rect x="620" y="234" width="3" height="7" fill="#2d632d"/>
<rect x="621" y="235" width="1" height="5" fill="#84b084"/>
<rect x="625" y="230" width="1" height="15" fill="#8a1c1c"/>
<rect x="624" y="236" width="3" height="8" fill="#741010"/>
<rect x="629" y="238" width="1" height="13" fill="#8a1c1c"/>
<rect x="628" y="239" width="3" height="11" fill="#741010"/>
<rect x="633" y="238" width="1" height="19" fill="#2f6b2f"/>
<rect x="632" y="240" width="3" height="10" fill="#2d632d"/>
<rect x="633" y="241" width="1" height="8" fill="#84b084"/>
<rect x="637" y="234" width="1" height="13" fill="#8a1c1c"/>
<rect x="636" y="237" width="3" height="9" fill="#741010"/>
<rect x="642" y="247" width="1" height="16" fill="#8a1c1c"/>
<rect x="641" y="249" width="3" height="8" fill="#8a2020"/>
<rect x="642" y="250" width="1" height="6" fill="#e0a8a8"/>
<rect x="646" y="230" width="1" height="27" fill="#2f6b2f"/>
<rect x="645" y="233" width="3" height="17" fill="#2d632d"/>
<rect x="646" y="234" width="1" height="15" fill="#84b084"/>
<rect x="649" y="214" width="1" height="21" fill="#2f6b2f"/>
<rect x="648" y="214" width="3" height="21" fill="#2d632d"/>
<rect x="649" y="215" width="1" height="19" fill="#84b084"/>
<rect x="653" y="214" width="1" height="16" fill="#8a1c1c"/>
<rect x="652" y="219" width="3" height="10" fill="#741010"/>
<rect x="657" y="216" width="1" height="20" fill="#8a1c1c"/>
<rect x="656" y="222" width="3" height="13" fill="#741010"/>
<rect x="661" y="232" width="1" height="37" fill="#8a1c1c"/>
<rect x="660" y="233" width="3" height="28" fill="#741010"/>
<rect x="666" y="254" width="1" height="24" fill="#8a1c1c"/>
<rect x="665" y="255" width="3" height="23" fill="#741010"/>
<rect x="670" y="247" width="1" height="34" fill="#2f6b2f"/>
<rect x="669" y="249" width="3" height="28" fill="#2d632d"/>
<rect x="670" y="250" width="1" height="26" fill="#84b084"/>
<rect x="674" y="234" width="1" height="16" fill="#2f6b2f"/>
<rect x="673" y="236" width="3" height="8" fill="#2d632d"/>
<rect x="674" y="237" width="1" height="6" fill="#84b084"/>
<rect x="678" y="214" width="1" height="26" fill="#2f6b2f"/>
<rect x="677" y="216" width="3" height="22" fill="#2d632d"/>
<rect x="678" y="217" width="1" height="20" fill="#84b084"/>
<rect x="682" y="211" width="1" height="37" fill="#8a1c1c"/>
<rect x="681" y="219" width="3" height="28" fill="#741010"/>
<rect x="686" y="237" width="1" height="14" fill="#8a1c1c"/>
<rect x="685" y="239" width="3" height="10" fill="#741010"/>
<rect x="690" y="252" width="1" height="14" fill="#8a1c1c"/>
<rect x="689" y="253" width="3" height="12" fill="#741010"/>
<rect x="694" y="252" width="1" height="16" fill="#2f6b2f"/>
<rect x="693" y="260" width="3" height="3" fill="#2d632d"/>
<rect x="694" y="261" width="1" height="1" fill="#84b084"/>
<rect x="698" y="258" width="1" height="20" fill="#8a1c1c"/>
<rect x="697" y="259" width="3" height="17" fill="#741010"/>
<rect x="702" y="261" width="1" height="15" fill="#8a1c1c"/>
<rect x="701" y="269" width="3" height="4" fill="#741010"/>
<rect x="706" y="266" width="1" height="15" fill="#2f6b2f"/>
<rect x="705" y="270" width="3" height="4" fill="#2d632d"/>
<rect x="706" y="271" width="1" height="2" fill="#84b084"/>
<rect x="710" y="259" width="1" height="15" fill="#2f6b2f"/>
<rect x="709" y="262" width="3" height="10" fill="#2d632d"/>
<rect x="710" y="263" width="1" height="8" fill="#84b084"/>
<rect x="714" y="250" width="1" height="11" fill="#2f6b2f"/>
<rect x="713" y="255" width="3" height="4" fill="#2d632d"/>
<rect x="714" y="256" width="1" height="2" fill="#84b084"/>
<rect x="718" y="260" width="1" height="12" fill="#8a1c1c"/>
<rect x="717" y="261" width="3" height="10" fill="#741010"/>
<rect x="723" y="274" width="1" height="19" fill="#8a1c1c"/>
<rect x="722" y="278" width="3" height="12" fill="#741010"/>
</g>
<path d="M0.0 178.0C1.0 176.9 3.9 174.5 6.0 171.6C8.1 168.7 10.4 164.5 12.5 160.5C14.6 156.5 16.2 153.1 18.8 147.5C21.3 141.9 24.9 131.6 28.0 127.0C31.1 122.4 34.9 121.4 37.5 120.0C40.1 118.6 41.7 118.4 43.8 118.5C45.8 118.6 47.9 119.5 50.0 120.6C52.1 121.7 54.4 123.4 56.2 125.0C58.1 126.6 59.6 129.0 61.2 130.0C62.9 131.0 64.0 130.3 66.2 131.2C68.5 132.2 72.5 134.1 75.0 135.6C77.5 137.1 79.2 138.0 81.2 140.0C83.3 142.0 85.4 144.2 87.5 147.5C89.6 150.8 92.0 156.2 93.8 160.0C95.5 163.8 96.3 166.2 98.0 170.0C99.7 173.8 102.0 179.0 104.0 183.0C106.0 187.0 108.2 190.3 110.3 194.0C112.3 197.7 114.3 201.9 116.3 205.0C118.3 208.1 119.9 210.9 122.3 212.6C124.7 214.3 127.4 214.6 130.4 215.0C133.4 215.4 137.7 214.7 140.4 215.0C143.1 215.3 144.7 216.8 146.4 217.0C148.1 217.2 148.1 215.5 150.4 216.0C152.8 216.5 157.2 218.3 160.5 220.0C163.8 221.7 167.2 223.7 170.5 226.0C173.8 228.3 178.0 232.0 180.6 234.0C183.2 236.0 184.1 236.3 186.0 238.0C187.9 239.7 189.7 241.5 192.0 244.0C194.3 246.5 197.3 249.5 200.0 253.0C202.7 256.5 205.3 261.0 208.0 265.0C210.7 269.0 213.3 273.7 216.0 277.0C218.7 280.3 221.3 282.5 224.0 285.0C226.7 287.5 229.3 290.0 232.0 292.0C234.7 294.0 237.3 295.7 240.0 297.0C242.7 298.3 245.3 298.8 248.0 300.0C250.7 301.2 253.7 302.8 256.4 304.0C259.1 305.2 261.7 305.8 264.4 307.0C267.1 308.2 269.7 309.8 272.4 311.0C275.1 312.2 277.8 313.0 280.5 314.0C283.2 315.0 285.8 317.5 288.5 317.0C291.2 316.5 294.5 313.0 296.5 311.0C298.5 309.0 299.2 306.8 300.6 305.0C302.0 303.2 303.3 301.3 304.6 300.0C305.9 298.7 306.6 297.8 308.6 297.0C310.6 296.2 314.0 295.7 316.6 295.5C319.2 295.3 321.8 296.2 324.0 296.0C326.2 295.8 327.3 296.0 330.0 294.0C332.7 292.0 336.7 287.5 340.0 284.0C343.3 280.5 346.7 276.7 350.0 273.0C353.3 269.3 357.3 264.5 360.0 262.0C362.7 259.5 364.3 258.7 366.0 257.8C367.7 256.9 367.7 256.8 370.0 256.8C372.3 256.8 377.0 257.6 380.0 258.0C383.0 258.4 385.3 258.9 388.0 259.0C390.7 259.1 393.3 258.7 396.0 258.6C398.7 258.5 401.2 258.4 404.0 258.6C406.8 258.8 409.8 259.6 412.5 260.0C415.2 260.4 417.8 260.2 420.5 261.0C423.2 261.8 425.8 264.1 428.5 264.6C431.2 265.1 434.2 264.7 436.5 263.8C438.8 262.9 440.1 260.8 442.0 259.0C443.9 257.2 445.7 254.7 448.0 253.0C450.3 251.3 453.3 250.3 456.0 249.0C458.7 247.7 461.3 246.8 464.0 245.0C466.7 243.2 469.3 239.9 472.0 238.0C474.7 236.1 477.3 234.8 480.0 233.8C482.7 232.8 485.7 232.3 488.0 231.8C490.3 231.3 492.0 230.7 494.0 231.0C496.0 231.3 497.7 232.0 500.0 233.8C502.3 235.6 505.3 239.1 508.0 241.8C510.7 244.5 513.3 247.5 516.0 250.0C518.7 252.5 521.3 255.0 524.0 257.0C526.7 259.0 529.3 260.8 532.0 262.0C534.7 263.2 537.7 263.5 540.0 264.0C542.3 264.5 544.0 264.3 546.0 265.0C548.0 265.7 549.6 267.1 552.0 268.0C554.4 268.9 557.8 269.9 560.5 270.7C563.2 271.5 565.8 272.1 568.5 273.0C571.2 273.9 573.8 275.2 576.5 276.0C579.2 276.8 582.4 277.5 584.6 278.0C586.8 278.5 587.9 278.8 589.6 278.8C591.3 278.8 592.9 278.6 594.6 278.0C596.3 277.4 597.8 276.5 600.0 275.0C602.2 273.5 605.3 271.0 608.0 269.0C610.7 267.0 613.3 264.7 616.0 263.0C618.7 261.3 621.3 260.2 624.0 259.0C626.7 257.8 629.3 257.0 632.0 256.0C634.7 255.0 637.3 254.5 640.0 253.0C642.7 251.5 645.3 248.7 648.0 247.0C650.7 245.3 653.7 243.3 656.0 242.6C658.3 241.9 660.0 242.4 662.0 242.6C664.0 242.8 666.0 243.8 668.0 243.8C670.0 243.8 672.3 243.1 674.0 242.6C675.7 242.1 676.3 241.1 678.0 241.0C679.7 240.9 681.7 241.1 684.0 241.8C686.3 242.5 689.3 243.8 692.0 245.0C694.7 246.2 697.2 247.7 700.0 249.0C702.8 250.3 705.8 251.6 708.5 252.6C711.2 253.6 714.1 253.8 716.5 255.0C718.9 256.2 721.6 259.2 722.6 260.0" fill="none" stroke="#2222ee" stroke-width="1.3" stroke-linejoin="round"/>
<path d="M0.0 170.0C0.5 169.8 3.8 169.5 5.0 167.5C6.2 165.5 11.1 153.2 12.5 150.0C13.9 146.8 17.5 139.1 18.8 136.0C20.0 132.9 23.8 122.6 25.0 119.0C26.2 115.4 30.0 102.7 31.0 100.0C32.0 97.3 34.4 93.4 35.0 92.5C35.6 91.6 36.5 90.8 37.0 90.6C37.5 90.4 39.3 90.6 40.0 91.0C40.7 91.4 43.0 94.1 43.8 95.0C44.5 95.9 46.1 98.5 47.0 100.0C47.9 101.5 51.6 107.8 52.5 110.0C53.4 112.2 55.4 119.5 56.2 122.5C57.1 125.5 60.4 137.5 61.2 140.0C62.1 142.5 64.1 146.2 65.0 147.5C65.9 148.8 69.0 151.4 70.0 152.5C71.0 153.6 74.0 157.3 75.0 158.0C76.0 158.7 78.9 158.5 80.0 159.0C81.1 159.5 84.7 161.7 86.0 163.0C87.3 164.3 91.6 169.3 93.0 172.0C94.4 174.7 98.5 185.8 100.0 190.0C101.5 194.2 106.4 209.4 108.0 214.0C109.6 218.6 114.7 233.2 116.0 236.0C117.3 238.8 119.8 242.0 121.0 242.0C122.2 242.0 126.3 238.0 128.0 236.0C129.7 234.0 136.2 224.4 138.0 222.0C139.8 219.6 144.6 213.5 146.0 212.0C147.4 210.5 151.4 207.4 152.5 207.0C153.6 206.6 155.3 206.9 156.5 208.0C157.7 209.1 163.1 216.2 164.5 218.0C165.9 219.8 169.3 224.6 170.5 226.0C171.7 227.4 175.5 230.6 176.5 232.0C177.5 233.4 179.8 238.3 180.6 240.0C181.4 241.7 183.7 247.5 184.6 249.0C185.5 250.5 188.7 253.3 190.0 255.0C191.3 256.7 196.6 263.9 198.0 266.0C199.4 268.1 202.8 273.9 204.0 276.0C205.2 278.1 208.8 284.9 210.0 287.0C211.2 289.1 215.0 295.6 216.0 297.0C217.0 298.4 218.8 300.3 220.0 301.0C221.2 301.7 226.5 303.2 228.0 304.0C229.5 304.8 233.8 308.4 235.0 309.0C236.2 309.6 239.1 310.2 240.0 310.0C240.9 309.8 243.2 307.8 244.0 307.0C244.8 306.2 246.9 302.2 247.7 302.0C248.5 301.8 250.8 304.3 252.0 305.0C253.2 305.7 258.4 308.3 260.0 309.0C261.6 309.7 266.8 311.4 268.4 312.0C270.0 312.6 275.1 314.2 276.5 315.0C277.9 315.8 281.4 319.3 282.5 320.0C283.6 320.7 287.0 322.2 288.0 322.0C289.0 321.8 291.6 318.9 292.5 318.0C293.4 317.1 295.7 314.4 296.5 313.0C297.3 311.6 299.8 305.9 300.6 304.0C301.4 302.1 303.8 295.7 304.6 294.0C305.4 292.3 307.8 288.2 308.6 287.0C309.4 285.8 311.8 282.8 312.6 282.0C313.4 281.2 315.9 279.3 316.6 279.0C317.3 278.7 318.9 278.4 320.0 278.7C321.1 279.0 326.2 281.7 328.0 282.0C329.8 282.3 336.4 282.3 338.0 282.0C339.6 281.7 342.8 280.5 344.0 279.0C345.2 277.5 348.8 269.4 350.0 267.0C351.2 264.6 354.8 257.0 356.0 255.0C357.2 253.0 361.0 247.7 362.0 246.6C363.0 245.5 365.2 244.1 366.0 243.8C366.8 243.5 369.0 243.6 370.0 243.8C371.0 244.0 374.6 245.1 376.0 245.8C377.4 246.5 382.6 249.4 384.0 250.6C385.4 251.8 388.8 256.7 390.0 258.0C391.2 259.3 394.6 263.3 396.0 264.0C397.4 264.7 402.4 264.8 404.0 265.0C405.6 265.2 410.9 266.0 412.5 266.0C414.1 266.0 418.9 264.5 420.5 264.6C422.1 264.7 427.2 266.7 428.5 267.0C429.8 267.3 432.5 268.4 433.5 268.0C434.5 267.6 437.4 263.8 438.5 262.6C439.6 261.4 443.5 257.3 444.6 255.8C445.8 254.3 448.9 249.6 450.0 248.0C451.1 246.4 454.6 241.6 456.0 240.0C457.4 238.4 462.6 233.5 464.0 232.0C465.4 230.5 468.9 225.8 470.0 225.0C471.1 224.2 474.1 223.4 475.0 223.5C475.9 223.6 477.7 225.5 479.0 225.7C480.3 225.8 486.4 225.0 488.0 225.0C489.6 225.0 493.8 225.0 495.0 225.7C496.2 226.4 498.9 230.4 500.0 232.0C501.1 233.6 504.8 239.8 506.0 242.0C507.2 244.2 510.6 251.4 512.0 254.0C513.4 256.6 518.4 265.5 520.0 268.0C521.6 270.5 526.8 277.7 528.0 279.0C529.2 280.3 531.6 281.1 532.4 281.0C533.2 280.9 535.4 278.9 536.4 278.0C537.4 277.1 541.2 272.7 542.4 272.0C543.6 271.3 547.2 271.2 548.4 271.0C549.6 270.8 553.3 270.1 554.5 270.0C555.7 269.9 559.1 269.7 560.5 270.0C561.9 270.3 566.9 272.4 568.5 273.0C570.1 273.6 574.9 275.2 576.5 276.0C578.1 276.8 583.3 280.2 584.6 281.0C585.9 281.8 588.6 284.0 589.6 284.0C590.6 284.0 593.6 281.8 594.6 281.0C595.6 280.2 598.7 277.5 600.0 276.0C601.3 274.5 606.4 268.2 608.0 266.0C609.6 263.8 614.4 256.0 616.0 254.0C617.6 252.0 622.4 247.2 624.0 246.0C625.6 244.8 630.4 242.3 632.0 242.0C633.6 241.7 638.4 243.3 640.0 243.0C641.6 242.7 646.4 239.6 648.0 239.0C649.6 238.4 654.8 237.1 656.0 237.0C657.2 236.9 659.0 237.2 660.0 237.8C661.0 238.4 664.8 242.1 666.0 242.6C667.2 243.1 670.8 242.9 672.0 242.6C673.2 242.3 677.0 240.0 678.0 240.0C679.0 240.0 681.0 241.8 682.0 242.6C683.0 243.4 686.6 247.4 688.0 248.0C689.4 248.6 694.4 248.4 696.0 249.0C697.6 249.6 702.9 252.8 704.5 254.0C706.1 255.2 711.1 259.8 712.5 261.0C713.9 262.2 717.5 265.2 718.5 266.0C719.5 266.8 722.2 268.4 722.6 268.7" fill="none" stroke="#ff10ee" stroke-width="1.3" stroke-linejoin="round"/>
<path d="M10.6 50.5L765.5 203" stroke="#ff1a1a" stroke-width="1.5" fill="none"/>
<path d="M226.4 235.2L759.4 171" stroke="#2828c8" stroke-width="1.5" fill="none"/>
<path d="M193.6 352.6L765.5 276" stroke="#2a2aee" stroke-width="1.5" fill="none"/>
<path d="M470.5 198.6L757.7 215.8" stroke="#28c828" stroke-width="1.5" fill="none"/>
<path d="M479 294.4L764.4 310.7" stroke="#28c828" stroke-width="1.5" fill="none"/>
<circle cx="473.6" cy="200.8" r="2.3" fill="none" stroke="#888" stroke-width="0.8"/><circle cx="593" cy="287.8" r="2.2" fill="none" stroke="#777" stroke-width="0.7" opacity="0.7"/>
<path d="M473 200L592.6 286.6" stroke="#f07868" stroke-width="1.2" fill="none"/>
<clipPath id="cc"><rect x="0" y="36" width="766" height="372"/></clipPath><g clip-path="url(#cc)">
<circle cx="226.4" cy="235.2" r="2.4" fill="#fff" fill-opacity="0.5" stroke="#666" stroke-width="0.9"/>
<circle cx="759.4" cy="171" r="2.4" fill="#fff" fill-opacity="0.5" stroke="#666" stroke-width="0.9"/>
<circle cx="193.6" cy="352.6" r="2.4" fill="#fff" fill-opacity="0.5" stroke="#666" stroke-width="0.9"/>
<circle cx="470.5" cy="198.6" r="2.4" fill="#fff" fill-opacity="0.5" stroke="#666" stroke-width="0.9"/>
<circle cx="757.7" cy="215.8" r="2.4" fill="#fff" fill-opacity="0.5" stroke="#666" stroke-width="0.9"/>
<circle cx="479" cy="294.4" r="2.4" fill="#fff" fill-opacity="0.5" stroke="#666" stroke-width="0.9"/>
<circle cx="764.6" cy="310.8" r="2.4" fill="#fff" fill-opacity="0.5" stroke="#666" stroke-width="0.9"/>
</g>
<path d="M690 212.4H695.7V217.7H698.5L692.75 225L687 217.7H690Z" fill="#ff1a1a"/>
<rect x="768.5" y="285" width="29.5" height="13" rx="2.5" fill="#fff" stroke="#333" stroke-width="1"/>
<text x="770.5" y="294.9" font-size="9" fill="#222">21.69</text>
<rect x="768.5" y="494.5" width="28" height="12" rx="2.5" fill="#fff" stroke="#333" stroke-width="1"/>
<text x="770" y="503.9" font-size="9" fill="#222">-0.10</text>
<path d="M0.0 477.8C0.6 477.6 2.5 478.0 3.8 477.0C5.0 476.0 6.0 473.8 7.5 471.5C9.0 469.2 10.6 466.2 12.5 463.5C14.4 460.8 16.9 457.9 18.8 455.2C20.6 452.6 22.1 449.6 23.8 447.8C25.4 445.9 27.1 444.3 28.8 444.0C30.4 443.7 32.1 445.0 33.8 446.0C35.4 447.0 37.1 448.5 38.8 450.2C40.4 452.0 41.9 453.6 43.8 456.5C45.6 459.4 47.9 464.2 50.0 467.8C52.1 471.3 54.4 474.8 56.2 477.8C58.1 480.7 58.5 483.6 61.2 485.2C64.0 486.9 69.2 486.7 72.5 487.8C75.8 488.8 78.8 489.4 81.2 491.5C83.8 493.6 85.2 496.9 87.5 500.2C89.8 503.6 92.5 508.0 95.0 511.5C97.5 515.0 100.0 518.8 102.5 521.5C105.0 524.2 108.0 526.2 110.0 527.8C112.0 529.3 112.6 530.9 114.5 531.0C116.4 531.1 119.1 530.1 121.2 528.5C123.4 526.9 125.2 523.7 127.5 521.5C129.8 519.3 132.5 517.1 135.0 515.2C137.5 513.4 140.6 511.1 142.5 510.2C144.4 509.4 144.8 510.9 146.2 510.2C147.7 509.6 149.8 507.1 151.2 506.5C152.7 505.9 153.1 505.8 155.0 506.5C156.9 507.2 160.0 510.1 162.5 511.0C165.0 511.9 167.5 511.5 170.0 512.0C172.5 512.5 175.0 513.0 177.5 514.0C180.0 515.0 182.5 516.5 185.0 517.8C187.5 519.0 190.0 520.5 192.5 521.5C195.0 522.5 197.5 522.5 200.0 523.5C202.5 524.5 204.9 526.3 207.5 527.8C210.1 529.2 213.2 531.7 215.5 532.0C217.8 532.3 219.2 530.6 221.2 529.5C223.2 528.4 225.2 525.9 227.5 525.2C229.8 524.6 232.7 526.2 235.0 525.8C237.3 525.3 239.2 524.0 241.2 522.8C243.3 521.5 245.4 519.2 247.5 518.5C249.6 517.8 251.7 518.9 253.8 518.5C255.8 518.1 257.9 516.3 260.0 516.0C262.1 515.7 264.4 516.4 266.2 516.5C268.1 516.6 269.6 516.8 271.2 516.5C272.9 516.2 274.4 514.7 276.2 514.5C278.1 514.3 280.6 515.3 282.5 515.2C284.4 515.2 285.8 515.2 287.5 514.0C289.2 512.8 290.8 509.6 292.5 507.8C294.2 505.9 295.8 504.8 297.5 502.8C299.2 500.7 300.6 497.8 302.5 495.2C304.4 492.7 306.9 488.4 308.8 487.2C310.6 486.1 311.7 487.5 313.8 488.5C315.8 489.5 319.0 492.7 321.2 493.2C323.5 493.8 325.6 492.7 327.5 492.0C329.4 491.3 330.8 490.2 332.5 489.0C334.2 487.8 335.4 485.7 337.5 484.5C339.6 483.3 342.9 483.0 345.0 482.0C347.1 481.0 348.1 479.5 350.0 478.5C351.9 477.5 354.4 477.2 356.2 476.0C358.1 474.8 359.8 472.5 361.2 471.5C362.7 470.5 363.5 470.1 365.0 470.0C366.5 469.9 368.3 470.0 370.0 471.0C371.7 472.0 373.3 474.8 375.0 476.0C376.7 477.2 378.1 477.8 380.0 478.5C381.9 479.2 384.4 479.3 386.2 480.2C388.1 481.2 389.8 483.3 391.2 484.0C392.7 484.7 393.5 484.5 395.0 484.5C396.5 484.5 398.3 483.9 400.0 484.0C401.7 484.1 403.3 484.8 405.0 485.2C406.7 485.8 407.9 486.7 410.0 487.0C412.1 487.3 415.0 486.6 417.5 487.2C420.0 487.9 422.3 490.2 425.0 490.8C427.7 491.2 431.2 491.3 433.8 490.2C436.2 489.2 438.1 486.4 440.0 484.5C441.9 482.6 443.1 480.3 445.0 479.0C446.9 477.7 449.2 476.9 451.2 476.5C453.3 476.1 455.6 476.5 457.5 476.8C459.4 477.0 460.8 478.2 462.5 478.0C464.2 477.8 465.4 476.2 467.5 475.2C469.6 474.3 472.9 472.5 475.0 472.2C477.1 472.0 478.1 472.8 480.0 473.5C481.9 474.2 484.0 475.6 486.2 476.5C488.5 477.4 491.5 477.7 493.8 479.0C496.0 480.3 497.9 482.3 500.0 484.5C502.1 486.7 504.2 489.7 506.2 492.0C508.3 494.3 510.2 496.8 512.5 498.5C514.8 500.2 517.5 501.4 520.0 502.2C522.5 503.1 525.0 503.7 527.5 503.8C530.0 503.8 532.7 503.4 535.0 502.8C537.3 502.1 539.6 500.5 541.2 499.8C542.9 499.0 543.1 498.6 545.0 498.5C546.9 498.4 550.0 498.6 552.5 499.0C555.0 499.4 557.7 500.5 560.0 501.0C562.3 501.5 564.2 502.1 566.2 502.0C568.3 501.9 570.2 500.7 572.5 500.5C574.8 500.3 577.5 500.5 580.0 500.8C582.5 501.0 585.2 501.8 587.5 501.8C589.8 501.7 591.7 501.0 593.8 500.2C595.8 499.5 598.1 498.2 600.0 497.0C601.9 495.8 603.3 494.3 605.0 492.8C606.7 491.2 607.9 489.2 610.0 487.8C612.1 486.3 615.0 485.0 617.5 484.0C620.0 483.0 622.1 482.5 625.0 482.0C627.9 481.5 632.1 481.0 635.0 481.0C637.9 481.0 640.0 482.5 642.5 482.0C645.0 481.5 647.5 478.5 650.0 477.8C652.5 477.0 655.6 477.1 657.5 477.8C659.4 478.4 659.8 480.2 661.2 481.5C662.7 482.8 664.6 484.5 666.2 485.2C667.9 486.0 669.4 486.2 671.2 485.8C673.1 485.3 675.2 483.1 677.5 482.8C679.8 482.4 682.5 482.5 685.0 483.5C687.5 484.5 690.0 487.5 692.5 489.0C695.0 490.5 697.7 491.6 700.0 492.8C702.3 493.9 704.2 495.6 706.2 496.0C708.3 496.4 710.6 495.2 712.5 495.2C714.4 495.3 715.8 495.8 717.5 496.5C719.2 497.2 721.7 499.0 722.5 499.5" fill="none" stroke="#2a9c9c" stroke-width="1.2" stroke-linejoin="round"/>
<path d="M0.0 482.8C0.8 482.5 2.9 482.8 5.0 481.5C7.1 480.2 10.0 477.3 12.5 475.2C15.0 473.2 17.9 471.1 20.0 469.0C22.1 466.9 22.9 464.8 25.0 462.8C27.1 460.7 30.2 457.8 32.5 456.5C34.8 455.2 36.7 455.0 38.8 454.8C40.8 454.5 43.1 454.8 45.0 455.2C46.9 455.8 47.9 456.1 50.0 457.8C52.1 459.4 55.0 462.8 57.5 465.2C60.0 467.8 62.1 470.2 65.0 472.8C67.9 475.2 71.7 478.2 75.0 480.2C78.3 482.3 82.1 483.4 85.0 485.2C87.9 487.1 90.0 489.0 92.5 491.5C95.0 494.0 97.5 497.3 100.0 500.2C102.5 503.2 105.0 506.3 107.5 509.0C110.0 511.7 112.5 514.6 115.0 516.5C117.5 518.4 120.0 519.6 122.5 520.2C125.0 520.9 127.5 520.8 130.0 520.5C132.5 520.2 135.0 519.3 137.5 518.5C140.0 517.7 142.5 516.6 145.0 515.8C147.5 514.9 150.0 513.9 152.5 513.2C155.0 512.6 157.1 512.3 160.0 512.0C162.9 511.7 166.7 511.4 170.0 511.5C173.3 511.6 176.7 512.0 180.0 512.8C183.3 513.5 186.7 514.8 190.0 515.8C193.3 516.7 197.1 517.5 200.0 518.5C202.9 519.5 205.0 520.4 207.5 521.5C210.0 522.6 212.5 524.4 215.0 525.2C217.5 526.1 220.0 526.5 222.5 526.5C225.0 526.5 227.1 525.6 230.0 525.5C232.9 525.4 236.7 526.1 240.0 525.8C243.3 525.4 246.7 524.3 250.0 523.5C253.3 522.7 256.7 521.8 260.0 521.0C263.3 520.2 266.7 519.5 270.0 519.0C273.3 518.5 277.1 518.2 280.0 517.8C282.9 517.3 285.0 517.3 287.5 516.5C290.0 515.7 292.5 514.2 295.0 512.8C297.5 511.3 300.0 509.6 302.5 507.8C305.0 505.9 307.5 503.2 310.0 501.5C312.5 499.8 315.0 498.7 317.5 497.8C320.0 496.8 322.5 496.4 325.0 495.8C327.5 495.1 330.0 494.9 332.5 494.0C335.0 493.1 337.1 491.5 340.0 490.2C342.9 489.0 347.1 487.6 350.0 486.5C352.9 485.4 355.0 484.8 357.5 483.5C360.0 482.2 362.5 480.2 365.0 479.0C367.5 477.8 370.0 476.8 372.5 476.5C375.0 476.2 377.5 476.7 380.0 477.0C382.5 477.3 385.0 477.6 387.5 478.2C390.0 478.9 392.9 480.2 395.0 480.8C397.1 481.2 397.9 480.9 400.0 481.2C402.1 481.6 405.0 482.5 407.5 483.0C410.0 483.5 412.1 483.8 415.0 484.5C417.9 485.2 421.7 486.2 425.0 487.0C428.3 487.8 431.7 489.2 435.0 489.0C438.3 488.8 441.7 487.0 445.0 486.0C448.3 485.0 451.7 483.7 455.0 482.8C458.3 481.8 461.7 481.2 465.0 480.2C468.3 479.3 471.7 478.0 475.0 477.2C478.3 476.5 482.1 476.1 485.0 476.0C487.9 475.9 490.0 476.0 492.5 476.5C495.0 477.0 497.5 477.9 500.0 479.0C502.5 480.1 505.0 481.7 507.5 483.2C510.0 484.8 512.5 486.8 515.0 488.2C517.5 489.8 520.0 491.0 522.5 492.2C525.0 493.5 527.7 494.8 530.0 495.8C532.3 496.8 533.8 497.8 536.2 498.2C538.8 498.7 541.9 498.3 545.0 498.5C548.1 498.7 551.7 499.0 555.0 499.2C558.3 499.5 561.7 499.9 565.0 500.0C568.3 500.1 571.7 499.8 575.0 500.0C578.3 500.2 582.1 500.8 585.0 501.0C587.9 501.2 590.0 501.1 592.5 501.0C595.0 500.9 597.5 501.0 600.0 500.2C602.5 499.5 605.0 497.8 607.5 496.5C610.0 495.2 612.5 493.4 615.0 492.2C617.5 491.1 620.0 490.5 622.5 489.5C625.0 488.5 627.1 487.3 630.0 486.5C632.9 485.7 636.7 485.2 640.0 484.5C643.3 483.8 646.7 482.8 650.0 482.2C653.3 481.7 656.7 480.9 660.0 481.0C663.3 481.1 667.1 482.4 670.0 482.8C672.9 483.1 675.0 483.2 677.5 483.2C680.0 483.2 682.5 482.5 685.0 482.8C687.5 483.0 690.0 483.7 692.5 484.5C695.0 485.3 697.5 486.7 700.0 487.8C702.5 488.8 705.0 490.1 707.5 490.8C710.0 491.4 712.5 491.0 715.0 491.5C717.5 492.0 721.2 493.6 722.5 494.0" fill="none" stroke="#2a2aa4" stroke-width="1.2" stroke-linejoin="round"/>
<rect x="3.5" y="411.8" width="12.7" height="13.2" rx="2" fill="#fff" stroke="#7c7c7c" stroke-width="1"/>
<path d="M6.9 415.9l5.4 5.8M12.3 415.9L6.9 421.7" stroke="#5c5c5c" stroke-width="1.3" fill="none"/>
<g>
<text x="27" y="423.8" font-size="9.3" fill="#1f8c8c" textLength="58.5" lengthAdjust="spacingAndGlyphs">MACD 12 26</text>
<text x="102.5" y="423.8" font-size="9.3" fill="#2222a0" textLength="104.5" lengthAdjust="spacingAndGlyphs">Exp Moving Average 9</text>
</g>
<path d="M90 419h5.8l-2.9 3.8z" fill="#808080"/>
<path d="M212 419h5.8l-2.9 3.8z" fill="#7a8a7a"/>
<g class="dt">
<text x="40.5" y="554">JAS</text>
<text x="93.7" y="554">OND</text>
<text x="150.4" y="554">11</text>
<text x="199.5" y="554">AMJ</text>
<text x="252.7" y="554">JAS</text>
<text x="308.5" y="554">OND</text>
<text x="361.8" y="554">12</text>
<text x="414.2" y="554">AMJ</text>
<text x="467.5" y="554">JAS</text>
<text x="520.5" y="554">OND</text>
<text x="572.6" y="554">13</text>
<text x="625.2" y="554">AMJ</text>
<text x="6.3" y="566.5">10</text>
<text x="150" y="566.5">2011</text>
<text x="361.8" y="566.5">2012</text>
<text x="572.6" y="566.5">2013</text>
</g>
<text class="t" x="693" y="559.8" font-size="8.6" fill="#222" textLength="39.5" lengthAdjust="spacingAndGlyphs">9/20/2013</text>
</svg></body></html>
